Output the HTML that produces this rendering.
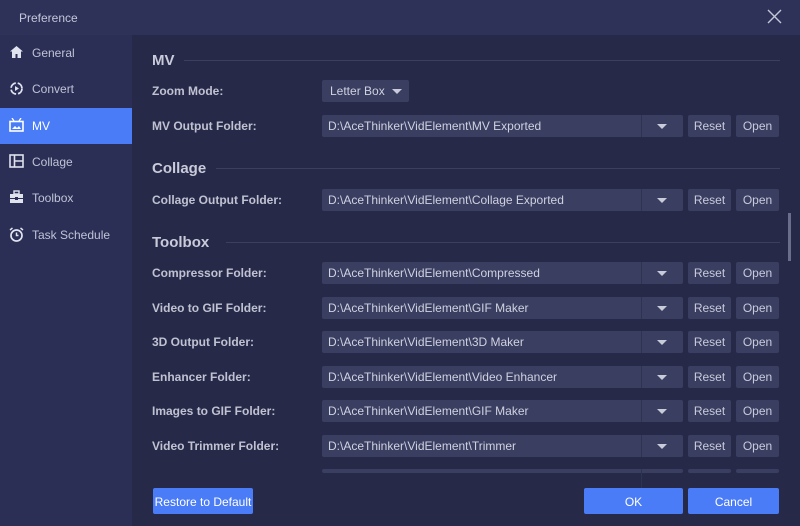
<!DOCTYPE html>
<html><head><style>
*{margin:0;padding:0;box-sizing:border-box}
body{width:800px;height:526px;background:#262a48;font-family:"Liberation Sans",sans-serif;position:relative;overflow:hidden;color:#c8cadb}
.title{position:absolute;left:0;top:0;width:800px;height:35px;background:#2e3259;font-size:12px;color:#c5c7d8;padding:11px 0 0 19px}
.close{position:absolute;right:18px;top:9px}
.side{position:absolute;left:0;top:35px;width:132px;height:491px;background:#2b2f55}
.nav{position:absolute;left:0;width:132px;height:36px;font-size:12px;color:#c0c3d6;display:flex;align-items:center;padding-left:32px}
.nav.on{background:#4a7cf7;color:#fff}
.nav svg{position:absolute;left:9px;top:10px}
.h{position:absolute;left:152px;font-size:15px;font-weight:bold;color:#c9cbdb}
.line{position:absolute;height:1px;background:#3b3f62;right:20px}
.lbl{position:absolute;left:152px;font-size:12px;font-weight:bold;color:#c0c2d2}
.in{position:absolute;left:322px;width:361px;height:22px;background:#3a3e61;border-radius:2px;font-size:12px;color:#d0d2e0;padding:4px 0 0 6px}
.in:after{content:"";position:absolute;left:319px;top:0;width:1px;height:22px;background:#2e3253}
.tri{position:absolute;width:0;height:0;border-left:5px solid transparent;border-right:5px solid transparent;border-top:5px solid #c9cbdb}
.in .tri{left:335px;top:9px}
.b{position:absolute;width:43px;height:22px;background:#3a3e61;border-radius:2px;font-size:12px;color:#c9cbdb;text-align:center;padding-top:4px}
.btn{position:absolute;top:488px;height:26px;background:#4a7cf7;color:#fff;font-size:12px;text-align:center;padding-top:7px;border-radius:2px}
</style></head><body>
<div class="title">Preference
<svg class="close" width="15" height="15" viewBox="0 0 15 15"><path d="M1 1L14 14M14 1L1 14" stroke="#c5c7d8" stroke-width="1.4"/></svg></div>
<div class="side">
<div class="nav" style="top:0"><svg width="15" height="14" viewBox="0 0 15 14"><path d="M7.5 1L1 6.5h2V13h3.5V9h2v4H12V6.5h2z" fill="#e0e2ee"/></svg>General</div>
<div class="nav" style="top:36px"><svg width="15" height="15" viewBox="0 0 15 15"><circle cx="7.5" cy="7.5" r="5.5" fill="none" stroke="#e0e2ee" stroke-width="1.8" stroke-dasharray="7 2"/><path d="M6 5v5l4-2.5z" fill="#e0e2ee"/></svg>Convert</div>
<div class="nav on" style="top:73px"><svg width="15" height="14" viewBox="0 0 15 14"><path d="M3 0l2 3M12 0l-2 3" stroke="#fff" stroke-width="1.3"/><rect x="1" y="3.5" width="13" height="9.5" fill="none" stroke="#fff" stroke-width="1.6"/><path d="M3 11l3-3 2 2 2-2 2 3z" fill="#fff"/></svg>MV</div>
<div class="nav" style="top:109px"><svg width="15" height="14" viewBox="0 0 15 14"><rect x="1" y="1" width="13" height="12" fill="none" stroke="#e0e2ee" stroke-width="1.6"/><path d="M5.5 1v12M5.5 7H14" stroke="#e0e2ee" stroke-width="1.6"/></svg>Collage</div>
<div class="nav" style="top:145px"><svg width="15" height="14" viewBox="0 0 15 14"><rect x="5" y="1" width="5" height="3" fill="none" stroke="#e0e2ee" stroke-width="1.4"/><rect x="1" y="4" width="13" height="9" fill="#e0e2ee"/><rect x="1" y="8" width="13" height="1" fill="#2b2f55"/><rect x="6" y="7" width="3" height="3" fill="#2b2f55"/></svg>Toolbox</div>
<div class="nav" style="top:182px"><svg width="15" height="15" viewBox="0 0 15 15"><circle cx="7.5" cy="8.5" r="5.5" fill="none" stroke="#e0e2ee" stroke-width="1.7"/><path d="M7.5 5.5v3h2M1 3l2.5-2M14 3l-2.5-2" stroke="#e0e2ee" stroke-width="1.5" fill="none"/></svg>Task Schedule</div>
</div>

<div class="h" style="top:52px">MV</div><div class="line" style="left:184px;top:60px"></div>
<div class="lbl" style="top:84px">Zoom Mode:</div>
<div style="position:absolute;left:322px;top:80px;width:87px;height:22px;background:#3a3e61;border-radius:2px;font-size:12px;color:#d0d2e0;padding:4px 0 0 8px">Letter Box<div class="tri" style="left:70px;top:9px"></div></div>
<div class="lbl" style="top:119px">MV Output Folder:</div>
<div class="in" style="top:115px">D:\AceThinker\VidElement\MV Exported<div class="tri"></div></div>
<div class="b" style="left:688px;top:115px">Reset</div><div class="b" style="left:736px;top:115px">Open</div>

<div class="h" style="top:160px">Collage</div><div class="line" style="left:216px;top:168px"></div>
<div class="lbl" style="top:193px">Collage Output Folder:</div>
<div class="in" style="top:189px">D:\AceThinker\VidElement\Collage Exported<div class="tri"></div></div>
<div class="b" style="left:688px;top:189px">Reset</div><div class="b" style="left:736px;top:189px">Open</div>

<div class="h" style="top:234px">Toolbox</div><div class="line" style="left:226px;top:242px"></div>

<div class="lbl" style="top:266px">Compressor Folder:</div>
<div class="in" style="top:262px">D:\AceThinker\VidElement\Compressed<div class="tri"></div></div>
<div class="b" style="left:688px;top:262px">Reset</div><div class="b" style="left:736px;top:262px">Open</div>
<div class="lbl" style="top:301px">Video to GIF Folder:</div>
<div class="in" style="top:297px">D:\AceThinker\VidElement\GIF Maker<div class="tri"></div></div>
<div class="b" style="left:688px;top:297px">Reset</div><div class="b" style="left:736px;top:297px">Open</div>
<div class="lbl" style="top:335px">3D Output Folder:</div>
<div class="in" style="top:331px">D:\AceThinker\VidElement\3D Maker<div class="tri"></div></div>
<div class="b" style="left:688px;top:331px">Reset</div><div class="b" style="left:736px;top:331px">Open</div>
<div class="lbl" style="top:370px">Enhancer Folder:</div>
<div class="in" style="top:366px">D:\AceThinker\VidElement\Video Enhancer<div class="tri"></div></div>
<div class="b" style="left:688px;top:366px">Reset</div><div class="b" style="left:736px;top:366px">Open</div>
<div class="lbl" style="top:404px">Images to GIF Folder:</div>
<div class="in" style="top:400px">D:\AceThinker\VidElement\GIF Maker<div class="tri"></div></div>
<div class="b" style="left:688px;top:400px">Reset</div><div class="b" style="left:736px;top:400px">Open</div>
<div class="lbl" style="top:439px">Video Trimmer Folder:</div>
<div class="in" style="top:435px">D:\AceThinker\VidElement\Trimmer<div class="tri"></div></div>
<div class="b" style="left:688px;top:435px">Reset</div><div class="b" style="left:736px;top:435px">Open</div>
<div class="in" style="top:469px;height:4px"></div>
<div class="b" style="left:688px;top:469px;height:4px"></div><div class="b" style="left:736px;top:469px;height:4px"></div>
<div style="position:absolute;left:788px;top:213px;width:3px;height:48px;background:#6a6e8a"></div>

<div class="btn" style="left:153px;width:100px">Restore to Default</div>
<div class="btn" style="left:584px;width:99px">OK</div>
<div class="btn" style="left:688px;width:91px">Cancel</div>
</body></html>
